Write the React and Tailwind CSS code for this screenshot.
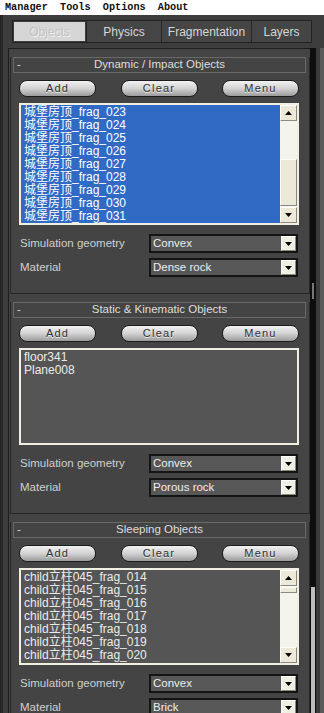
import React from 'react';

const ui = "font-['Tahoma','Liberation_Sans','Noto_Sans_CJK_SC',sans-serif]";

const Arrow = ({ up }) => (
  <svg width="7" height="4" viewBox="0 0 7 4">
    <path d={up ? 'M3.5 0 L7 4 L0 4 Z' : 'M0 0 L7 0 L3.5 4 Z'} fill="#000" />
  </svg>
);

const SbButton = ({ up, h = 'h-[16px]' }) => (
  <div className={`${h} w-full bg-[#ece9d8] border border-t-white border-l-white border-r-[#8a8a80] border-b-[#8a8a80] flex items-center justify-center`}>
    <Arrow up={up} />
  </div>
);

const Btn = ({ label }) => (
  <div className="w-[77px] h-[17px] rounded-[8px] border border-[#1c1c1c] bg-linear-to-b from-[#f2f2f2] via-[#d2d2d2] to-[#9c9c9c] flex items-center justify-center text-[11px] tracking-[1.2px] text-[#2e2e2e] [text-shadow:0_1px_0_#eee]">
    {label}
  </div>
);

const ListBox = ({ items, selected, height, thumbTop, thumbH }) => (
  <div className={`mt-[6px] ${height} border-2 border-[#f0efe2] flex ${selected ? 'bg-[#316ac5]' : 'bg-[#555555]'}`}>
    <div className="flex-1 pt-[1px] pl-[3px] overflow-hidden">
      {items.map((t) => (
        <div key={t} className={`h-[13px] leading-[13px] text-[12px] whitespace-nowrap ${selected ? 'text-white' : 'text-[#ececec]'}`}>
          {t}
        </div>
      ))}
    </div>
    {thumbTop !== undefined && (
      <div className="w-[17px] flex flex-col bg-[#f4f3ec]">
        <SbButton up />
        <div className={thumbTop} />
        <div className={`${thumbH} bg-[#ece9d8] border border-t-white border-l-white border-r-[#8a8a80] border-b-[#8a8a80]`} />
        <div className="flex-1" />
        <SbButton />
      </div>
    )}
  </div>
);

const Dropdown = ({ label, value, top }) => (
  <div className={`${top} flex items-center h-[19px]`}>
    <div className="w-[130px] pl-[1px] text-[11.5px] text-[#cfcfcf]">{label}</div>
    <div className="w-[149px] h-[19px] border-2 border-[#141414] bg-[#575757] flex items-center">
      <div className="flex-1 pl-[2px] text-[11.5px] text-[#ededed]">{value}</div>
      <div className="w-[15px] h-[15px] bg-[#f0efe4] border border-t-white border-l-white border-r-[#8a8a80] border-b-[#8a8a80] flex items-center justify-center">
        <Arrow />
      </div>
    </div>
  </div>
);

const Rollout = ({ title, list, mt, children }) => (
  <div className={`${mt} border-x border-b border-[#262626]`}>
    <div className="ml-[2px] mr-[3px] h-[16px] border border-[#696969] relative flex items-center justify-center text-[11.5px] text-[#dedede]">
      <span className="absolute left-[3px] inset-y-0 flex items-center">-</span>
      {title}
    </div>
    <div className="pl-[8px] pr-[10px] pb-[16px]">
      <div className="mt-[7px] flex justify-between">
        <Btn label="Add" />
        <Btn label="Clear" />
        <Btn label="Menu" />
      </div>
      {list}
      {children}
    </div>
  </div>
);

const frags = ['023', '024', '025', '026', '027', '028', '029', '030', '031'].map((n) => `城堡房顶_frag_${n}`);
const childs = ['014', '015', '016', '017', '018', '019', '020'].map((n) => `child立柱045_frag_${n}`);

export default function App() {
  return (
    <div className={`w-[324px] h-[713px] overflow-hidden flex flex-col bg-[#3d3d3d] ${ui}`}>
      <div className="h-[15px] bg-white flex items-center pl-[5px] font-['Liberation_Mono',monospace] font-bold text-[10.2px] text-[#111] whitespace-pre">
        {'Manager  Tools  Options  About'}
      </div>
      <div className="flex-1 flex flex-col border-l-[3px] border-[#262626] relative">
        <div className="ml-[9px] mt-[5px] w-[300px] h-[23px] border border-[#222] flex text-[12px]">
          <div className="w-[71px] m-[1px] bg-[#d6d6d6] text-[#c2c2c2] flex items-center justify-center [text-shadow:1px_1px_0_#eee]">Objects</div>
          <div className="w-[76px] border-x border-[#262626] bg-[#454545] text-[#d6d6d6] flex items-center justify-center">Physics</div>
          <div className="w-[90px] border-r border-[#262626] bg-[#454545] text-[#d6d6d6] flex items-center justify-center">Fragmentation</div>
          <div className="flex-1 bg-[#454545] text-[#d6d6d6] flex items-center justify-center">Layers</div>
        </div>
        <div className="flex mt-[5px] flex-1">
          <div className="ml-[5px] w-[302px] border-l border-t border-[#1e1e1e] bg-[#444444] pl-[1px] pt-[8px]">
            <Rollout
              title="Dynamic / Impact Objects"
              mt=""
              list={<ListBox items={frags} selected height="h-[122px]" thumbTop="h-[38px]" thumbH="h-[47px]" />}
            >
              <Dropdown label="Simulation geometry" value="Convex" top="mt-[9px]" />
              <Dropdown label="Material" value="Dense rock" top="mt-[5px]" />
            </Rollout>
            <Rollout
              title="Static & Kinematic Objects"
              mt="mt-[8px]"
              list={<ListBox items={['floor341', 'Plane008']} height="h-[97px]" />}
            >
              <Dropdown label="Simulation geometry" value="Convex" top="mt-[9px]" />
              <Dropdown label="Material" value="Porous rock" top="mt-[5px]" />
            </Rollout>
            <Rollout
              title="Sleeping Objects"
              mt="mt-[8px]"
              list={<ListBox items={childs} height="h-[97px]" thumbTop="h-[1px]" thumbH="h-[6px]" />}
            >
              <Dropdown label="Simulation geometry" value="Convex" top="mt-[9px]" />
              <Dropdown label="Material" value="Brick" top="mt-[5px]" />
            </Rollout>
          </div>
          <div className="w-[6px] bg-[#0e0e0e] flex flex-col">
            <div className="h-[235px]" />
            <div className="h-[16px] mx-[2px] border-x border-[#777]" />
            <div className="h-[288px]" />
            <div className="flex-1 mx-[1px] bg-[#bdbdbd]" />
          </div>
          <div className="w-[4px] bg-[#3a3a3a]" />
          <div className="flex-1 bg-[#5a5a5a]" />
        </div>
      </div>
    </div>
  );
}
